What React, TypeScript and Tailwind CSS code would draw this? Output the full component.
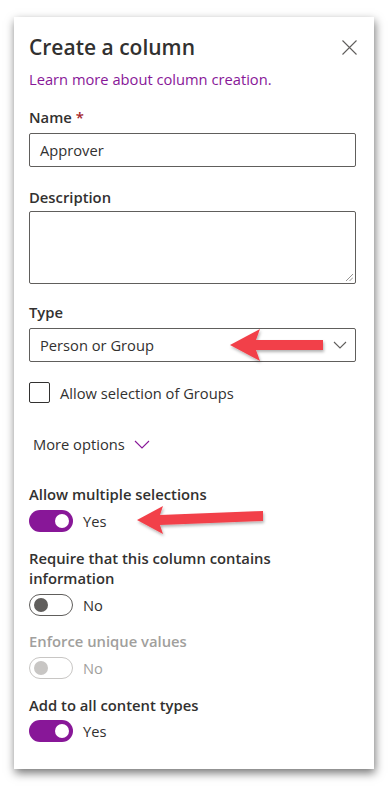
const FONT = "font-['Open_Sans','Noto_Sans',sans-serif]";

function Chevron({ w, h, color }: { w: number; h: number; color: string }) {
    return (
        <svg width={w + 2} height={h + 2} viewBox={`-1 -1 ${w + 2} ${h + 2}`}>
            <path d={`M0 0 L${w / 2} ${h} L${w} 0`} fill="none" stroke={color} strokeWidth="1.1" />
        </svg>
    );
}

function Toggle({ on, disabled }: { on?: boolean; disabled?: boolean }) {
    if (on) {
        return (
            <div className="w-[44px] h-[22px] rounded-full bg-[#881798] flex items-center justify-end pr-[4px]">
                <div className="w-[14px] h-[14px] rounded-full bg-white" />
            </div>
        );
    }
    return (
        <div
            className={`w-[44px] h-[22px] rounded-full border flex items-center pl-[4px] ${
                disabled ? "border-[#c8c6c4]" : "border-[#605e5c]"
            }`}
        >
            <div className={`w-[14px] h-[14px] rounded-full ${disabled ? "bg-[#c8c6c4]" : "bg-[#605e5c]"}`} />
        </div>
    );
}

function ToggleRow({ on, disabled, label }: { on?: boolean; disabled?: boolean; label: string }) {
    return (
        <div className="flex items-center gap-[10px]">
            <Toggle on={on} disabled={disabled} />
            <span className={`text-[14.7px] leading-[20px] ${disabled ? "text-[#a19f9d]" : "text-[#323130]"}`}>{label}</span>
        </div>
    );
}

export default function App() {
    return (
        <div className={`relative w-[388px] h-[788px] bg-white pt-[17px] px-[14px] ${FONT}`}>
            <div className="w-[360px] h-[752px] bg-white shadow-[1px_4px_9px_rgba(0,0,0,0.55)] pt-[16px] pl-[15px] pr-[18px] text-[#323130]">
                {/* header */}
                <div className="flex items-center justify-between h-[28px]">
                    <h1 className="text-[21px] leading-[28px] font-semibold text-[#323130]">Create a column</h1>
                    <svg width="15" height="15" viewBox="0 0 15 15" className="mr-[-1px]">
                        <path d="M0.5 0.5 L14.5 14.5 M14.5 0.5 L0.5 14.5" stroke="#605e5c" strokeWidth="1.1" />
                    </svg>
                </div>
                <a className="block mt-[8px] text-[14.7px] leading-[20px] text-[#881798]">Learn more about column creation.</a>

                {/* name */}
                <div className="mt-[18px] text-[14.8px] leading-[20px] font-semibold">
                    Name <span className="text-[#a4262c]">*</span>
                </div>
                <div className="mt-[6px] h-[34px] border border-[#605e5c] rounded-[2px] flex items-center px-[10px] text-[14.7px]">
                    Approver
                </div>

                {/* description */}
                <div className="mt-[20px] text-[14.8px] leading-[20px] font-semibold">Description</div>
                <div className="mt-[4px] h-[73px] border border-[#605e5c] rounded-[2px] relative">
                    <svg className="absolute right-[2px] bottom-[2px]" width="8" height="8" viewBox="0 0 8 8">
                        <path d="M1 8 L8 1 M4.5 8 L8 4.5" stroke="#8a8886" strokeWidth="0.9" />
                    </svg>
                </div>

                {/* type */}
                <div className="mt-[18px] text-[14.8px] leading-[20px] font-semibold">Type</div>
                <div className="mt-[6px] h-[34px] border border-[#605e5c] rounded-[2px] flex items-center justify-between pl-[10px] pr-[8px] text-[14.7px]">
                    <span>Person or Group</span>
                    <Chevron w={12} h={6} color="#605e5c" />
                </div>

                <div className="mt-[20px] flex items-center gap-[10px]">
                    <div className="w-[21px] h-[21px] border border-[#323130] rounded-[2px]" />
                    <span className="text-[14.7px] leading-[20px]">Allow selection of Groups</span>
                </div>

                <div className="mt-[31px] ml-[4px] flex items-center gap-[9px] h-[20px]">
                    <span className="text-[14.7px] leading-[20px]">More options</span>
                    <Chevron w={14} h={7} color="#881798" />
                </div>

                <div className="mt-[30px] text-[14.8px] leading-[20px] font-semibold">Allow multiple selections</div>
                <div className="mt-[6px]">
                    <ToggleRow on label="Yes" />
                </div>

                <div className="mt-[16px] text-[14.8px] leading-[20px] font-semibold w-[280px]">
                    Require that this column contains information
                </div>
                <div className="mt-[6px]">
                    <ToggleRow label="No" />
                </div>

                <div className="mt-[15px] text-[14.8px] leading-[20px] font-semibold text-[#a19f9d]">Enforce unique values</div>
                <div className="mt-[6px]">
                    <ToggleRow disabled label="No" />
                </div>

                <div className="mt-[16px] text-[14.8px] leading-[20px] font-semibold">Add to all content types</div>
                <div className="mt-[5px]">
                    <ToggleRow on label="Yes" />
                </div>
            </div>

            {/* annotation arrows */}
            <svg className="absolute inset-0 pointer-events-none" width="388" height="788" viewBox="0 0 388 788">
                <defs>
                    <filter id="sh" x="-20%" y="-50%" width="140%" height="200%">
                        <feDropShadow dx="1" dy="2" stdDeviation="1.5" floodColor="#000" floodOpacity="0.3" />
                    </filter>
                </defs>
                <polygon
                    points="230,345 260,329 256,340 323,340 323,350 256,350 260,361"
                    fill="#f2414a"
                    filter="url(#sh)"
                />
                <polygon
                    points="137,520 163,506 160,515 263,511 263,521 160,525 163,534"
                    fill="#f2414a"
                    filter="url(#sh)"
                />
            </svg>
        </div>
    );
}
